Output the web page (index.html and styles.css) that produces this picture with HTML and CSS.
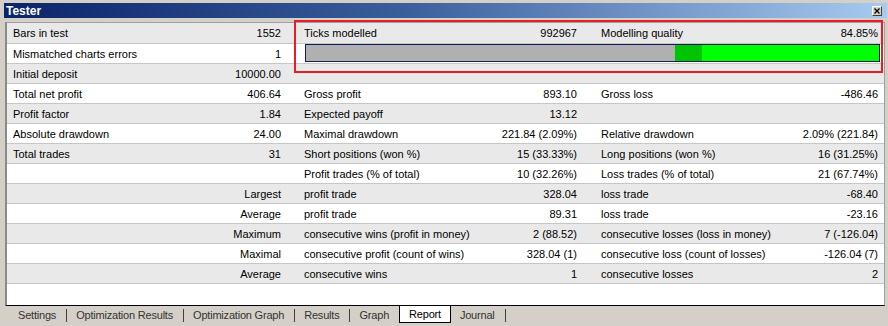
FILE: index.html
```html
<!DOCTYPE html>
<html lang="en">

<head>
    <meta charset="UTF-8">
    <title>Tester</title>
    <link rel="stylesheet" href="styles.css">
</head>

<body>
    <div class="window">
        <div class="titlebar">
            <span class="title">Tester</span>
            <span class="close">
                <svg width="6" height="6" viewBox="0 0 6 6"><path d="M0.5 0.5 L5.5 5.5 M5.5 0.5 L0.5 5.5" stroke="#000" stroke-width="1.3"/></svg>
            </span>
        </div>

        <div class="panel">
            <div class="row">
                <div class="cell"><span>Bars in test</span><span>1552</span></div>
                <div class="cell"><span>Ticks modelled</span><span>992967</span></div>
                <div class="cell"><span>Modelling quality</span><span>84.85%</span></div>
            </div>
            <div class="row">
                <div class="cell"><span>Mismatched charts errors</span><span>1</span></div>
                <div class="bar-cell">
                    <div class="quality-bar">
                        <div class="q-none"></div>
                        <div class="q-mid"></div>
                        <div class="q-good"></div>
                    </div>
                </div>
            </div>
            <div class="row">
                <div class="cell"><span>Initial deposit</span><span>10000.00</span></div>
                <div class="cell"></div>
                <div class="cell"></div>
            </div>
            <div class="row">
                <div class="cell"><span>Total net profit</span><span>406.64</span></div>
                <div class="cell"><span>Gross profit</span><span>893.10</span></div>
                <div class="cell"><span>Gross loss</span><span>-486.46</span></div>
            </div>
            <div class="row">
                <div class="cell"><span>Profit factor</span><span>1.84</span></div>
                <div class="cell"><span>Expected payoff</span><span>13.12</span></div>
                <div class="cell"></div>
            </div>
            <div class="row">
                <div class="cell"><span>Absolute drawdown</span><span>24.00</span></div>
                <div class="cell"><span>Maximal drawdown</span><span>221.84 (2.09%)</span></div>
                <div class="cell"><span>Relative drawdown</span><span>2.09% (221.84)</span></div>
            </div>
            <div class="row">
                <div class="cell"><span>Total trades</span><span>31</span></div>
                <div class="cell"><span>Short positions (won %)</span><span>15 (33.33%)</span></div>
                <div class="cell"><span>Long positions (won %)</span><span>16 (31.25%)</span></div>
            </div>
            <div class="row">
                <div class="cell"></div>
                <div class="cell"><span>Profit trades (% of total)</span><span>10 (32.26%)</span></div>
                <div class="cell"><span>Loss trades (% of total)</span><span>21 (67.74%)</span></div>
            </div>
            <div class="row">
                <div class="cell right"><span>Largest</span></div>
                <div class="cell"><span>profit trade</span><span>328.04</span></div>
                <div class="cell"><span>loss trade</span><span>-68.40</span></div>
            </div>
            <div class="row">
                <div class="cell right"><span>Average</span></div>
                <div class="cell"><span>profit trade</span><span>89.31</span></div>
                <div class="cell"><span>loss trade</span><span>-23.16</span></div>
            </div>
            <div class="row">
                <div class="cell right"><span>Maximum</span></div>
                <div class="cell"><span>consecutive wins (profit in money)</span><span>2 (88.52)</span></div>
                <div class="cell"><span>consecutive losses (loss in money)</span><span>7 (-126.04)</span></div>
            </div>
            <div class="row">
                <div class="cell right"><span>Maximal</span></div>
                <div class="cell"><span>consecutive profit (count of wins)</span><span>328.04 (1)</span></div>
                <div class="cell"><span>consecutive loss (count of losses)</span><span>-126.04 (7)</span></div>
            </div>
            <div class="row">
                <div class="cell right"><span>Average</span></div>
                <div class="cell"><span>consecutive wins</span><span>1</span></div>
                <div class="cell"><span>consecutive losses</span><span>2</span></div>
            </div>
        </div>

        <div class="tabs">
            <div class="tab first">Settings</div>
            <div class="tab">Optimization Results</div>
            <div class="tab">Optimization Graph</div>
            <div class="tab">Results</div>
            <div class="tab plain">Graph</div>
            <div class="tab active">Report</div>
            <div class="tab">Journal</div>
        </div>

        <div class="highlight"></div>
    </div>
</body>

</html>
```

FILE: styles.css
```css
body {
    margin: 0;
    background-color: #d4d0c8;
    font-family: 'Liberation Sans', Arial, sans-serif;
    font-size: 11px;
    color: #000;
}

.window {
    position: relative;
    height: 326px;
    padding: 3px 1px 0 4px;
    box-sizing: border-box;
    display: flex;
    flex-direction: column;
}

.titlebar {
    height: 15px;
    display: flex;
    align-items: center;
    justify-content: space-between;
    padding: 0 5px 0 2px;
    background: linear-gradient(to right, #0a246a, #3a5e9c 45%, #a6caf0);
}

.title {
    color: #fff;
    font-weight: bold;
    font-size: 12px;
}

.close {
    width: 8px;
    height: 8px;
    display: flex;
    align-items: center;
    justify-content: center;
    background-color: #d4d0c8;
    border: 1px solid;
    border-color: #fff #404040 #404040 #fff;
}

.panel {
    height: 284px;
    box-sizing: border-box;
    margin: 4px 2px 0 1px;
    background-color: #fff;
    border-top: 1px solid #a0a0a0;
    border-left: 2px solid #8a8a8a;
    border-right: 1px solid #a0a0a0;
    border-bottom: 1px solid #000;
}

.row {
    display: grid;
    grid-template-columns: 288px 297px 1fr;
    height: 19px;
    border-bottom: 1px solid #c6c6c6;
}

.row:first-child {
    height: 20px;
}

.row:nth-child(odd) {
    background-color: #e9e9e9;
}

.cell {
    display: flex;
    justify-content: space-between;
    align-items: center;
    white-space: nowrap;
}

.cell:nth-child(1) {
    padding: 0 14px 0 6px;
}

.cell:nth-child(2) {
    padding: 0 15px 0 9px;
}

.cell:nth-child(3) {
    padding: 0 6px 0 9px;
}

.cell.right {
    justify-content: flex-end;
}

.bar-cell {
    grid-column: 2 / 4;
    padding: 0 4px 0 10px;
}

.quality-bar {
    display: flex;
    height: 16px;
    border: 1px solid #101c5c;
}

.q-none {
    width: 369px;
    background-color: #b0b0b0;
}

.q-mid {
    width: 27px;
    background-color: #00c400;
}

.q-good {
    flex: 1;
    background-color: #00ff00;
}

.tabs {
    display: flex;
    align-items: flex-start;
    margin-left: 1px;
    color: #333;
    letter-spacing: -0.2px;
}

.tab {
    height: 13px;
    line-height: 13px;
    margin-top: 3px;
    padding: 0 10px 0 9px;
    border-right: 1px solid #404040;
}

.tab.first {
    padding-left: 13px;
}

.tab.plain {
    border-right: none;
}

.tab.active {
    height: 16px;
    line-height: 16px;
    margin-top: 0;
    padding: 0 9px;
    color: #000;
    background-color: #fff;
    border: 1px solid #000;
    border-top: none;
}

.highlight {
    position: absolute;
    left: 294px;
    top: 20px;
    width: 589px;
    height: 53px;
    box-sizing: border-box;
    border: 2px solid #ec1c24;
    pointer-events: none;
}
```
